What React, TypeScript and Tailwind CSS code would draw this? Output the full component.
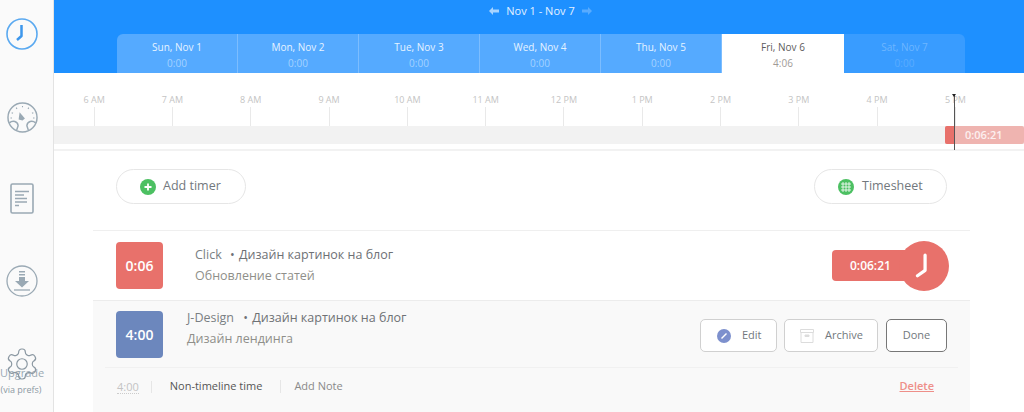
const days = [
  { label: 'Sun, Nov 1', time: '0:00' },
  { label: 'Mon, Nov 2', time: '0:00' },
  { label: 'Tue, Nov 3', time: '0:00' },
  { label: 'Wed, Nov 4', time: '0:00' },
  { label: 'Thu, Nov 5', time: '0:00' },
]
const hours = ['6 AM', '7 AM', '8 AM', '9 AM', '10 AM', '11 AM', '12 PM', '1 PM', '2 PM', '3 PM', '4 PM', '5 PM']

const Arrow = ({ className, flip }: { className: string; flip?: boolean }) => (
  <svg className={`w-[10px] h-[8px] mt-[5px] ${flip ? 'rotate-180' : ''} ${className}`} viewBox="0 0 10 8" fill="currentColor">
    <path d="M0 4l4-4v2.500h6v3H4V8z" />
  </svg>
)

const Sidebar = () => (
  <div className="relative w-[54px] shrink-0 h-[412px] bg-[#fafafa] border-r border-[#e3e3e3] flex flex-col items-center pr-[9px]">
    <svg className="mt-[18px] w-8 h-8 text-[#5aa9f0]" viewBox="0 0 32 32" fill="none" stroke="currentColor">
      <circle cx="16" cy="16" r="15" strokeWidth="1.600" />
      <path d="M15.500 7v11l-4.500 4" strokeWidth="2.500" stroke="#3d97ec" strokeLinejoin="round" />
    </svg>
    <svg className="mt-[52px] w-[31px] h-[31px] text-[#9aa9b4]" viewBox="0 0 32 32" fill="none" stroke="currentColor">
      <circle cx="16" cy="16" r="15" strokeWidth="1.500" />
      <path d="M2.500 21.500C6 18.500 11 20 11.500 24.500L10 29M29.500 21.500C26 18.500 21 20 20.500 24.500L22 29" strokeWidth="1.500" />
      <path d="M13 10.500l5.500 6.500-2.500 2-4-1z" fill="currentColor" stroke="none" />
      <path d="M16 4v1.500M9.500 5.800l.8 1.300M22.500 5.800l-.8 1.300M4.800 11l1.400.7M27.200 11l-1.400.7M3.600 16.500h1.500M28.400 16.500h-1.500" strokeWidth="1.100" />
    </svg>
    <svg className="mt-[50px] w-6 h-[31px] text-[#9aa9b4]" viewBox="0 0 24 31" fill="none" stroke="currentColor">
      <rect x="1" y="1" width="22" height="29" rx="1.500" strokeWidth="1.600" />
      <path d="M5 8.500h14M5 12h9M5 15.500h12M5 19h12M5 22.500h4" strokeWidth="1.300" />
    </svg>
    <svg className="mt-[51px] w-8 h-8 text-[#9aa9b4]" viewBox="0 0 32 32" fill="none" stroke="currentColor">
      <circle cx="16" cy="16" r="15" strokeWidth="1.300" />
      <path d="M13 6h6v1.500h-6zM13 9h6v1.500h-6zM13 12h6v4h4l-7 6.500-7-6.500h4z" fill="currentColor" stroke="none" />
      <path d="M8 25h16" strokeWidth="1.300" />
    </svg>
    <div className="absolute left-0 top-[365px] w-[42px] text-center text-[#9aa9b4] whitespace-nowrap">
      <div className="text-[11px] leading-[16px]">Upgrade</div>
      <div className="text-[9px] leading-[16px] mt-[1px] text-[#8c99a3]">(via prefs)</div>
    </div>
    <svg className="absolute left-[4px] top-[346px] w-9 h-9 text-[#8b98a2]" viewBox="0 0 24 24" fill="none" stroke="currentColor" strokeWidth="0.800">
      <path d="M12.220 2h-.440a2 2 0 0 0-2 2v.180a2 2 0 0 1-1 1.730l-.430.250a2 2 0 0 1-2 0l-.150-.080a2 2 0 0 0-2.730.730l-.220.380a2 2 0 0 0 .730 2.730l.150.100a2 2 0 0 1 1 1.720v.510a2 2 0 0 1-1 1.740l-.150.090a2 2 0 0 0-.730 2.730l.220.380a2 2 0 0 0 2.730.730l.150-.080a2 2 0 0 1 2 0l.430.250a2 2 0 0 1 1 1.730V20a2 2 0 0 0 2 2h.440a2 2 0 0 0 2-2v-.180a2 2 0 0 1 1-1.730l.430-.250a2 2 0 0 1 2 0l.150.080a2 2 0 0 0 2.730-.730l.220-.390a2 2 0 0 0-.730-2.730l-.150-.080a2 2 0 0 1-1-1.740v-.500a2 2 0 0 1 1-1.740l.150-.090a2 2 0 0 0 .730-2.730l-.220-.380a2 2 0 0 0-2.730-.730l-.150.080a2 2 0 0 1-2 0l-.430-.250a2 2 0 0 1-1-1.730V4a2 2 0 0 0-2-2z" />
      <circle cx="12" cy="12" r="3.500" />
    </svg>
  </div>
)

const Header = () => (
  <div className="h-[73px] bg-[#1e90ff] flex flex-col">
    <div className="h-[34px] flex items-start justify-center pt-[2px] gap-[7px] text-[11px] leading-[18px] text-[#e3f1ff] pl-[3px]">
      <Arrow className="text-[#a8d4ff]" />
      <span>Nov 1 - Nov 7</span>
      <Arrow className="text-[#58abff]" flip />
    </div>
    <div className="ml-[63px] w-[848px] h-[39px] flex">
      {days.map((d, i) => (
        <div key={d.label} className={`w-[121px] text-center bg-[#55aaff] border-r border-[#7cbdff] ${i === 0 ? 'rounded-tl-md' : ''}`}>
          <div className="text-[10px] leading-[14px] mt-[6px] text-[#e6f3ff]">{d.label}</div>
          <div className="text-[10px] leading-[14px] mt-[2px] text-[#a4d2ff]">{d.time}</div>
        </div>
      ))}
      <div className="w-[122px] text-center bg-white">
        <div className="text-[10px] leading-[14px] mt-[6px] text-[#5c5c5c]">Fri, Nov 6</div>
        <div className="text-[10px] leading-[14px] mt-[2px] text-[#a09a96]">4:06</div>
      </div>
      <div className="w-[121px] text-center bg-[#399cff] rounded-tr-md">
        <div className="text-[10px] leading-[14px] mt-[6px] text-[#6db6ff]">Sat, Nov 7</div>
        <div className="text-[10px] leading-[14px] mt-[2px] text-[#5aacff]">0:00</div>
      </div>
    </div>
  </div>
)

const Timeline = () => (
  <div className="relative h-[78px] border-b-2 border-[#f2f2f2]">
    <div className="h-[53px] pl-[1px] flex">
      {hours.map((h) => (
        <div key={h} className="w-[78.300px] flex flex-col items-center">
          <div className="mt-[20px] h-[13px] text-[9px] leading-[13px] text-[#c4c4c4] whitespace-nowrap">{h}</div>
          <div className="w-px h-[19px] mt-[1px] bg-[#e9e9e9]" />
        </div>
      ))}
    </div>
    <div className="h-[18px] bg-[#f2f2f2]" />
    <div className="absolute left-[891px] top-[53px] w-[79px] h-[18px] rounded-[2px] bg-[#efb4b0] text-white/80 text-[11px] leading-[18px] font-semibold pl-[20px]">0:06:21</div>
    <div className="absolute left-[891px] top-[53px] w-[9px] h-[18px] rounded-l-[2px] bg-[#e8716b]" />
    <div className="absolute left-[900px] top-[21px] w-px h-[56px] bg-[#555]" />
    <div className="absolute left-[898px] top-[21px] w-0 h-0 border-x-[2.500px] border-t-[3px] border-x-transparent border-t-[#222]" />
  </div>
)

const Toolbar = () => (
  <div className="h-[79px] pl-[62px] pr-[77px] pt-[18px] flex justify-between items-start">
    <div className="w-[130px] h-[35px] rounded-full border border-[#e6e6e6] flex items-center pl-[23px] gap-[7px] text-[12.500px] text-[#72787d]">
      <div className="w-4 h-4 rounded-full bg-[#4cc062] flex items-center justify-center text-white">
        <svg className="w-[10px] h-[10px]" viewBox="0 0 10 10" stroke="currentColor" strokeWidth="1.800"><path d="M5 1.500v7M1.500 5h7" /></svg>
      </div>
      Add timer
    </div>
    <div className="w-[133px] h-[35px] rounded-full border border-[#e6e6e6] flex items-center pl-[23px] gap-2 text-[12.500px] text-[#72787d]">
      <div className="w-4 h-4 rounded-full bg-[#4cc062] flex items-center justify-center">
        <svg className="w-[10px] h-[10px] text-white/80" viewBox="0 0 10 10" stroke="currentColor" strokeWidth="1"><path d="M0 2h10M0 5h10M0 8h10M2 0v10M5 0v10M8 0v10" /></svg>
      </div>
      Timesheet
    </div>
  </div>
)

const ActiveRow = () => (
  <div className="h-[70px] w-[877px] ml-[39px] border-t border-[#efefef] flex items-center">
    <div className="ml-[23px] w-[47px] h-[47px] rounded-[4px] bg-[#e8716b] text-white text-[14px] font-semibold flex items-center justify-center">0:06</div>
    <div className="ml-[32px]">
      <div className="text-[12.500px] leading-[20px] text-[#7a7f83]">Click <span className="ml-[5px] text-[#6e7175]">• <span className="ml-[1px]">Дизайн картинок на блог</span></span></div>
      <div className="text-[12.500px] leading-[20px] mt-[1px] text-[#8f8f8a]">Обновление статей</div>
    </div>
    <div className="ml-auto mr-[21px] flex items-center">
      <div className="w-[77px] h-[31px] rounded-l-[4px] bg-[#e8716b] text-white text-[12px] font-semibold pl-[18px] leading-[31px]">0:06:21</div>
      <div className="ml-[-10px] w-[50px] h-[50px] rounded-full bg-[#e8716b] flex items-center justify-center text-white">
        <svg className="w-[26px] h-[26px]" viewBox="0 0 24 24" fill="none" stroke="currentColor" strokeWidth="3" strokeLinecap="round" strokeLinejoin="round">
          <path d="M13 2v14l-7 5" />
        </svg>
      </div>
    </div>
  </div>
)

const DoneRow = () => (
  <div className="w-[877px] ml-[39px] h-[112px] bg-[#f9f9f9] border-t border-[#ececec]">
    <div className="h-[66px] flex items-center">
      <div className="ml-[23px] w-[47px] h-[47px] rounded-[4px] bg-[#6c87bd] text-white text-[14px] font-semibold flex items-center justify-center">4:00</div>
      <div className="ml-[24px] pb-[12px]">
        <div className="text-[12.500px] leading-[20px] text-[#7a7f83]">J-Design <span className="ml-[6px] text-[#6e7175]">• <span className="ml-[1px]">Дизайн картинок на блог</span></span></div>
        <div className="text-[12.500px] leading-[20px] mt-[1px] text-[#8f8f8a]">Дизайн лендинга</div>
      </div>
      <div className="ml-auto mr-[23px] mt-[3px] flex gap-2 text-[11px] text-[#72787d]">
        <div className="w-[77px] h-[33px] rounded-[5px] border border-[#d0d0d0] bg-white flex items-center pl-[16px] gap-[11px]">
          <div className="w-[14px] h-[14px] rounded-full bg-[#7d90cd] flex items-center justify-center">
            <svg className="w-2 h-2" viewBox="0 0 8 8" stroke="white" strokeWidth="1.400"><path d="M1.500 6.500L6.500 1.500" /></svg>
          </div>
          Edit
        </div>
        <div className="ml-[-1px] w-[94px] h-[33px] rounded-[5px] border border-[#d0d0d0] bg-white flex items-center pl-[15px] gap-[11px]">
          <svg className="w-[14px] h-[14px] text-[#dcdcdc]" viewBox="0 0 14 14" fill="none" stroke="currentColor"><path d="M.500.500h13v3H.500zM1 3.500v10h12v-10" /><path d="M5 6h4v1.500H5z" fill="currentColor" /></svg>
          Archive
        </div>
        <div className="w-[61px] h-[33px] rounded-[5px] border border-[#777] bg-white flex items-center justify-center">Done</div>
      </div>
    </div>
    <div className="ml-[12px] w-[853px] h-[44px] pb-[6px] border-t border-[#f1f1f1] flex items-center text-[11px]">
      <div className="ml-[12px] text-[#c4c4c4] leading-[13px] border-b border-dotted border-[#ccc]">4:00</div>
      <div className="w-px h-3 bg-[#e6e6e6] ml-3" />
      <div className="ml-[18px] text-[#555]">Non-timeline time</div>
      <div className="w-px h-[13px] bg-[#e6e6e6] ml-[18px]" />
      <div className="ml-[13px] text-[#8a8a8a]">Add Note</div>
      <div className="ml-auto mr-[24px] font-semibold underline text-[#ee8f89]">Delete</div>
    </div>
  </div>
)

export default function App() {
  return (
    <div className="flex h-[412px] w-[1024px] overflow-hidden bg-white" style={{ fontFamily: '"Open Sans", sans-serif' }}>
      <Sidebar />
      <div className="flex-1 min-w-0">
        <Header />
        <Timeline />
        <Toolbar />
        <ActiveRow />
        <DoneRow />
      </div>
    </div>
  )
}
